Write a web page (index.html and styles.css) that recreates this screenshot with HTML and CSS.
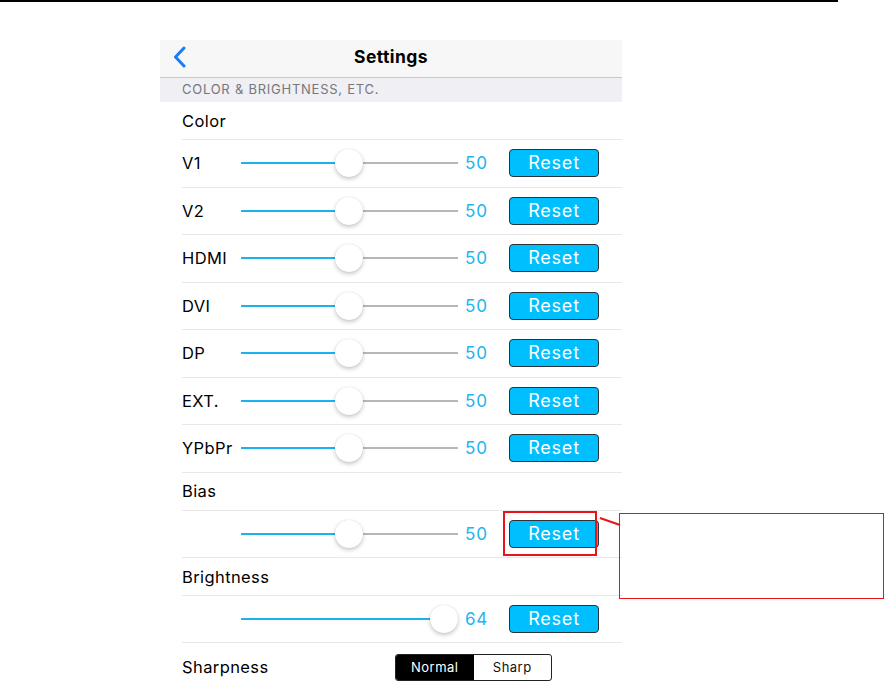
FILE: index.html
```html
<!DOCTYPE html>
<html>
<head>
<meta charset="utf-8">
<link rel="stylesheet" href="styles.css">
</head>
<body>
<div class="topline"></div>
<div class="phone">
  <div class="nav">
    <svg class="back" width="14" height="22" viewBox="0 0 14 22"><path d="M11 2 L2.5 11 L11 20" fill="none" stroke="#157efb" stroke-width="3" stroke-linecap="round" stroke-linejoin="round"/></svg>
    <span class="title">Settings</span>
  </div>
  <div class="sec">COLOR &amp; BRIGHTNESS, ETC.</div>
  <div class="list">
    <div class="row label-row">Color</div>
    <div class="row slider-row"><span class="lbl">V1</span><div class="slider"><div class="fill" style="width:108px"></div><div class="thumb" style="left:94px"></div></div><span class="val">50</span><button class="reset">Reset</button></div>
    <div class="row slider-row"><span class="lbl">V2</span><div class="slider"><div class="fill" style="width:108px"></div><div class="thumb" style="left:94px"></div></div><span class="val">50</span><button class="reset">Reset</button></div>
    <div class="row slider-row"><span class="lbl">HDMI</span><div class="slider"><div class="fill" style="width:108px"></div><div class="thumb" style="left:94px"></div></div><span class="val">50</span><button class="reset">Reset</button></div>
    <div class="row slider-row"><span class="lbl">DVI</span><div class="slider"><div class="fill" style="width:108px"></div><div class="thumb" style="left:94px"></div></div><span class="val">50</span><button class="reset">Reset</button></div>
    <div class="row slider-row"><span class="lbl">DP</span><div class="slider"><div class="fill" style="width:108px"></div><div class="thumb" style="left:94px"></div></div><span class="val">50</span><button class="reset">Reset</button></div>
    <div class="row slider-row"><span class="lbl">EXT.</span><div class="slider"><div class="fill" style="width:108px"></div><div class="thumb" style="left:94px"></div></div><span class="val">50</span><button class="reset">Reset</button></div>
    <div class="row slider-row"><span class="lbl">YPbPr</span><div class="slider"><div class="fill" style="width:108px"></div><div class="thumb" style="left:94px"></div></div><span class="val">50</span><button class="reset">Reset</button></div>
    <div class="row label-row">Bias</div>
    <div class="row slider-row"><span class="lbl"></span><div class="slider"><div class="fill" style="width:108px"></div><div class="thumb" style="left:94px"></div></div><span class="val">50</span><button class="reset">Reset</button></div>
    <div class="row label-row">Brightness</div>
    <div class="row slider-row bright"><span class="lbl"></span><div class="slider"><div class="fill" style="width:203px"></div><div class="thumb" style="left:189px"></div></div><span class="val">64</span><button class="reset">Reset</button></div>
    <div class="row sharp-row"><span class="sharp-lbl">Sharpness</span>
      <div class="seg"><span class="seg-item on">Normal</span><span class="seg-item">Sharp</span></div>
    </div>
  </div>
</div>
<div class="annot-box"></div>
<svg class="annot-line" width="26" height="14" viewBox="0 0 26 14"><line x1="2" y1="2" x2="22" y2="9" stroke="#e8141a" stroke-width="2"/></svg>
<div class="annot-note"></div>
</body>
</html>
```
FILE: styles.css
```css
html, body {
  margin: 0;
  padding: 0;
  background: #fff;
  overflow: hidden;
}
body {
  width: 884px;
  height: 687px;
  position: relative;
  font-family: Inter, "Liberation Sans", sans-serif;
  color: #000;
}
.topline {
  width: 838px;
  height: 2px;
  background: #000;
}
.phone {
  margin-left: 160px;
  margin-top: 38px;
  width: 462px;
  background: #fff;
}
.nav {
  height: 38px;
  box-sizing: border-box;
  padding-bottom: 4px;
  background: #f7f7f7;
  border-bottom: 1px solid #c8c7cc;
  display: flex;
  align-items: center;
  justify-content: center;
  position: relative;
}
.back {
  position: absolute;
  left: 13px;
  top: 6px;
}
.title {
  font-weight: 700;
  font-size: 17.5px;
  letter-spacing: 0.4px;
}
.sec {
  height: 24px;
  background: #efeff4;
  padding-left: 22px;
  font-size: 13px;
  color: #77777c;
  line-height: 22px;
  letter-spacing: 0.75px;
}
.row {
  margin-left: 22px;
  border-bottom: 1px solid #e8e8e8;
  box-sizing: border-box;
}
.label-row {
  height: 38px;
  display: flex;
  align-items: center;
  font-size: 16.5px;
  letter-spacing: 0.4px;
}
.slider-row {
  height: 47.5px;
  display: flex;
  align-items: center;
}
.bright {
  height: 47px;
}
.lbl {
  width: 59px;
  font-size: 16.5px;
  letter-spacing: 0.4px;
  flex: none;
}
.slider {
  width: 217px;
  height: 2px;
  background: #b7b7b7;
  position: relative;
  flex: none;
}
.fill {
  height: 2px;
  background: #1ab3ef;
}
.thumb {
  position: absolute;
  top: -13px;
  width: 28px;
  height: 28px;
  border-radius: 50%;
  background: #fff;
  box-shadow: 0 2px 4px rgba(0,0,0,0.22), 0 0 1px rgba(0,0,0,0.15);
}
.val {
  width: 44px;
  margin-left: 7px;
  font-size: 17px;
  letter-spacing: 0.8px;
  color: #22b4ee;
  flex: none;
}
.reset {
  width: 90px;
  height: 28px;
  box-sizing: border-box;
  border: 1px solid #2b3238;
  border-radius: 4px;
  background: #00bfff;
  color: #fff;
  font-family: Inter, "Liberation Sans", sans-serif;
  font-size: 18px;
  font-weight: 400;
  letter-spacing: 0.8px;
  padding: 0;
  line-height: 26px;
  flex: none;
}
.sharp-row {
  height: 48px;
  display: flex;
  align-items: center;
  border-bottom: none;
}
.sharp-lbl {
  width: 213px;
  font-size: 16.5px;
  letter-spacing: 0.4px;
  flex: none;
}
.seg {
  display: flex;
  width: 157px;
  height: 27px;
  box-sizing: border-box;
  border: 1px solid #222;
  border-radius: 3px;
  overflow: hidden;
}
.seg-item {
  flex: 1;
  display: flex;
  align-items: center;
  justify-content: center;
  font-size: 13px;
  letter-spacing: 0.5px;
  color: #111;
}
.seg-item.on {
  background: #000;
  color: #fff;
}
.annot-box {
  position: absolute;
  left: 503px;
  top: 511px;
  width: 94px;
  height: 45px;
  box-sizing: border-box;
  border: 2px solid #e8141a;
}
.annot-line {
  position: absolute;
  left: 598px;
  top: 516px;
}
.annot-note {
  position: absolute;
  left: 619px;
  top: 513px;
  width: 265px;
  height: 86px;
  box-sizing: border-box;
  border: 1px solid #e8141a;
}
```
